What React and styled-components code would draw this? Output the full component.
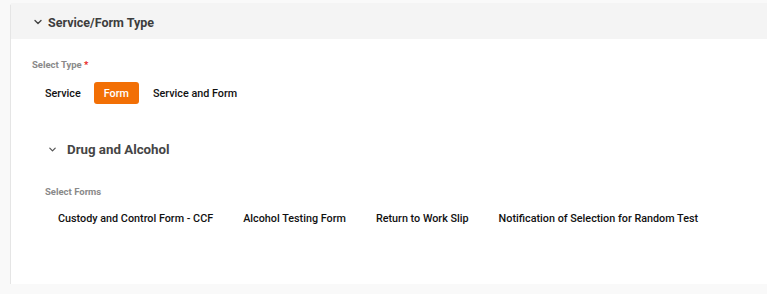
import React from "react";
import styled, { createGlobalStyle } from "styled-components";

const Global = createGlobalStyle`
  html, body { margin: 0; padding: 0; background: #f9f9f9; }
  body { font-family: Roboto, "Liberation Sans", Arial, sans-serif; overflow: hidden; }
`;

const Page = styled.div`
  display: flex;
  padding: 4px 0 0 11px;
  width: 767px;
  box-sizing: border-box;
`;

const Card = styled.section`
  flex: 1;
  margin-right: -6px;
  background: #fff;
  box-shadow: 0 1px 1px rgba(0, 0, 0, 0.35), 0 0 1px rgba(0, 0, 0, 0.12);
  height: 280px;
  display: flex;
  flex-direction: column;
`;

const Header = styled.div`
  height: 35px;
  background: #f4f4f4;
  display: flex;
  align-items: center;
  padding: 1px 0 0 22px;
  box-sizing: border-box;
  gap: 5px;
`;

const Title = styled.h2`
  margin: 0;
  font-size: 12.5px;
  font-weight: 700;
  color: #3d3d3d;
`;

const Body = styled.div`
  padding: 20px 0 0 21px;
  display: flex;
  flex-direction: column;
`;

const Label = styled.div`
  font-size: 9.5px;
  font-weight: 700;
  color: #8a8a8a;
  line-height: 12px;
  padding-left: ${(p) => p.$indent || 0}px;
  margin-top: ${(p) => p.$top || 0}px;
  span { color: #e8231b; }
`;

const Options = styled.div`
  display: flex;
  gap: ${(p) => p.$gap}px;
  margin-top: ${(p) => p.$top}px;
  padding-left: ${(p) => p.$indent || 0}px;
`;

const Option = styled.button`
  height: 22px;
  border: none;
  border-radius: 3px;
  padding: 0 ${(p) => p.$pad}px;
  font-family: inherit;
  font-size: 10.8px;
  font-weight: 500;
  background: ${(p) => (p.$active ? "#f26f05" : "transparent")};
  color: ${(p) => (p.$active ? "#fff" : "#111")};
  cursor: pointer;
`;

const SubHeader = styled.div`
  display: flex;
  align-items: center;
  gap: 10px;
  margin-top: 32px;
  padding-left: 16px;
  height: 26px;
`;

const SubTitle = styled.h3`
  margin: 0;
  font-size: 13.3px;
  font-weight: 700;
  color: #454545;
`;

const Chevron = ({ size = 9, color = "#444" }) => (
  <svg width={size} height={size} viewBox="0 0 10 10">
    <path d="M2 3.5 L5 6.5 L8 3.5" fill="none" stroke={color} strokeWidth="1.4" strokeLinecap="round" strokeLinejoin="round" />
  </svg>
);

export default function App() {
  return (
    <>
      <Global />
      <Page>
        <Card>
          <Header>
            <Chevron size={10} color="#444" />
            <Title>Service/Form Type</Title>
          </Header>
          <Body>
            <Label>
              Select Type <span>*</span>
            </Label>
            <Options $gap={4} $top={11} $indent={4}>
              <Option $pad={9}>Service</Option>
              <Option $pad={10} $active>Form</Option>
              <Option $pad={10}>Service and Form</Option>
            </Options>
            <SubHeader>
              <Chevron size={9} color="#555" />
              <SubTitle>Drug and Alcohol</SubTitle>
            </SubHeader>
            <Label $indent={13} $top={24}>Select Forms</Label>
            <Options $gap={4} $top={9} $indent={13}>
              <Option $pad={13}>Custody and Control Form - CCF</Option>
              <Option $pad={13}>Alcohol Testing Form</Option>
              <Option $pad={13}>Return to Work Slip</Option>
              <Option $pad={13}>Notification of Selection for Random Test</Option>
            </Options>
          </Body>
        </Card>
      </Page>
    </>
  );
}
